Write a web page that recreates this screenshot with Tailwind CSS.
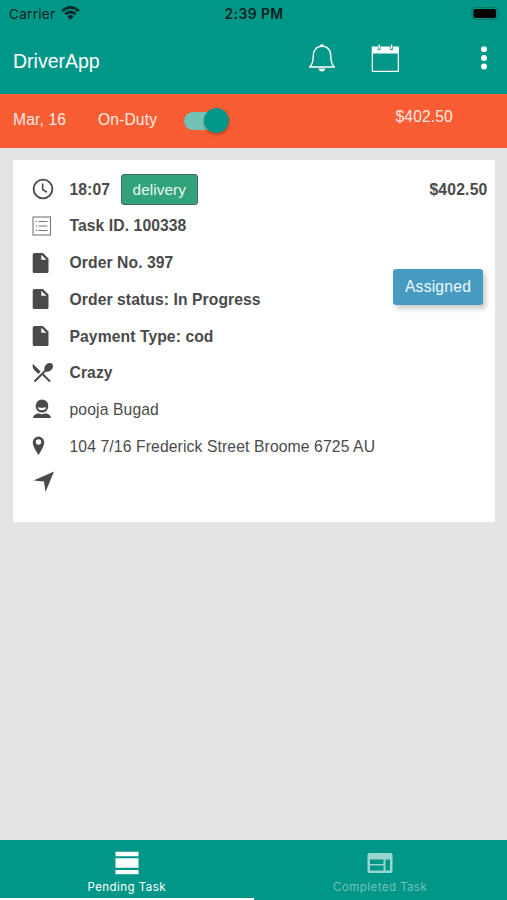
<!DOCTYPE html>
<html lang="en">
<head>
<meta charset="utf-8">
<title>DriverApp</title>
<script src="https://cdn.jsdelivr.net/npm/@tailwindcss/browser@4"></script>
</head>
<body class="w-[507px] h-[900px] overflow-hidden bg-[#e2e4e6] flex flex-col font-['Liberation_Sans',Arial,sans-serif] text-[#4a4a4a]">
<header class="h-[94px] shrink-0 bg-[#009688]">
  <div class="h-[28px] grid grid-cols-3 items-center pl-[9px] pr-[6px] text-black/80 font-['Inter',sans-serif] text-[13.5px]">
    <div class="flex items-center gap-[6px]"><span id="carrier" class="tracking-[0.3px]">Carrier</span>
      <svg class="w-[19px] h-[14px] -mt-[2px]" viewBox="0 0 19 14"><g fill="none" stroke="#062a27" stroke-width="2.8"><path d="M1.2 5Q9.500-2.200 17.800 5"/><path d="M4.200 8.300Q9.500 3.600 14.800 8.300"/></g><path d="M6.300 10.300Q9.500 7.700 12.700 10.300L9.500 13.700Z" fill="#062a27"/></svg>
    </div>
    <span id="time" class="text-center font-semibold text-[13.800px] tracking-[0.500px] -ml-[2px] pt-[1px]">2:39 PM</span>
    <svg class="justify-self-end w-[30px] h-[15px] -mt-[2px]" viewBox="0 0 30 15"><rect x="1" y="1.500" width="25.500" height="12" rx="3.500" fill="none" stroke="#047469" stroke-width="1.200"/><rect x="2.500" y="3" width="22.500" height="9" rx="2" fill="#000"/><path d="M28 5.500q2 2 0 4z" fill="#047469"/></svg>
  </div>
  <div class="h-[66px] flex items-start pl-[13px] text-white">
    <h1 class="w-[295px] pt-[21px] text-[19.500px] leading-[24px]"><span id="title">DriverApp</span></h1>
    <svg class="mt-[15px] w-[28px] h-[30px]" viewBox="0 0 28 30" fill="none" stroke="white" stroke-width="1.400"><path d="M1.500 24C4.500 21.500 5.200 19 5.200 13.500C5.200 7 8.500 3.300 14 3.300S22.800 7 22.800 13.500C22.800 19 23.500 21.500 26.500 24Z" stroke-linejoin="round"/><path d="M12 3.300a2 2 0 0 1 4 0z M10.500 25.500h7q-.8 3-3.500 3t-3.500-3z" fill="white" stroke="none"/></svg>
    <svg class="mt-[15px] ml-[35px] w-[29px] h-[30px]" viewBox="0 0 29 30"><path d="M.7 3.500H28V29H.7z M2 10.500V27.700H26.700V10.500z" fill="white" fill-rule="evenodd"/><g stroke="#009688" stroke-width="2.600"><path d="M8.200 3.400v3.600M20.600 3.400v3.600"/></g><g stroke="white" stroke-width="1.300"><path d="M8.200 1.500v4.500M20.600 1.500v4.500"/></g></svg>
    <svg class="mt-[16px] ml-[80px] w-[8px] h-[28px]" viewBox="0 0 8 28" fill="white"><circle cx="4" cy="5.300" r="3"/><circle cx="4" cy="14" r="3"/><circle cx="4" cy="22.500" r="3"/></svg>
  </div>
</header>
<section class="h-[53.500px] shrink-0 bg-[#f95d33] flex items-start text-[15.600px] leading-[20px] tracking-[0.150px] text-[#ffe9e2]">
  <span class="w-[98px] pl-[13px] pt-[16px]"><span id="date">Mar, 16</span></span>
  <span class="w-[86px] pt-[16px]"><span id="duty">On-Duty</span></span>
  <div class="relative mt-[18px] w-[46px] h-[18px]"><div class="absolute left-0 top-0 w-[40px] h-[18px] rounded-full bg-[#72c2b6]"></div><div class="absolute left-[20px] -top-[4px] w-[25px] h-[25px] rounded-full bg-[#009688] shadow-[0_2px_3px_rgba(0,0,0,0.25)]"></div></div>
  <span class="ml-[165.500px] pt-[13px]"><span id="amt">$402.50</span></span>
</section>
<main class="flex-1 pt-[12px] pl-[13px] pr-[12.500px]">
  <article class="relative h-[362.500px] bg-white pt-[12px] pl-[18px] pr-[7px] text-[15.700px] leading-[20px] tracking-[0.080px] font-bold">
    <div class="h-[36.650px] flex items-center -mt-[0.500px]">
      <svg class="w-[24px] h-[24px]" viewBox="0 0 24 24" fill="none" stroke="#4a4a4a" stroke-width="1.900"><circle cx="12" cy="12" r="9.400"/><path d="M11.700 6.500V12.500L16 15.200" stroke-width="1.600"/></svg>
      <span class="ml-[14.500px] w-[51px] pt-[1.500px]"><span id="r1">18:07</span></span>
      <span class="w-[77.500px] h-[31px] pt-[1.500px] flex items-center justify-center rounded-[3px] border border-[#4b6358] bg-[#32a27b] text-[#e8f8f2] text-[15.300px] font-normal"><span id="del">delivery</span></span>
      <span id="total" class="ml-auto pt-[1.500px] tracking-[0.200px]">$402.50</span>
    </div>
    <div class="h-[36.650px] flex items-center">
      <svg class="w-[24px] h-[24px] mr-[14.500px]" viewBox="0 0 24 24" fill="none" stroke="#777"><rect x="2" y="3" width="17.500" height="18" stroke-width="1.100"/><path d="M7.500 7.500h9M7.500 12h9M7.500 16.500h9M4.500 7.500h1.500M4.500 12h1.500M4.500 16.500h1.500"/></svg>
      <span id="r2" class="pt-[1px]">Task ID. 100338</span>
    </div>
    <div class="h-[36.650px] flex items-center">
      <svg class="w-[24px] h-[24px] mr-[14.500px]" viewBox="0 0 24 24" fill="#4a4a4a"><path fill-rule="evenodd" d="M3.500 2H12L17.500 7.500V20.500Q17.500 22 16 22H3.300Q1.700 22 1.700 20.500V3.700Q1.700 2 3.500 2zM10.300 3.700V8.800H15.500z"/></svg>
      <span id="r3" class="pt-[1px]">Order No. 397</span>
    </div>
    <div class="h-[36.650px] flex items-center">
      <svg class="w-[24px] h-[24px] mr-[14.500px]" viewBox="0 0 24 24" fill="#4a4a4a"><path fill-rule="evenodd" d="M3.500 2H12L17.500 7.500V20.500Q17.500 22 16 22H3.300Q1.700 22 1.700 20.500V3.700Q1.700 2 3.500 2zM10.300 3.700V8.800H15.500z"/></svg>
      <span id="r4" class="pt-[1.500px]">Order status: In Progress</span>
    </div>
    <div class="h-[36.650px] flex items-center">
      <svg class="w-[24px] h-[24px] mr-[14.500px]" viewBox="0 0 24 24" fill="#4a4a4a"><path fill-rule="evenodd" d="M3.500 2H12L17.500 7.500V20.500Q17.500 22 16 22H3.300Q1.700 22 1.700 20.500V3.700Q1.700 2 3.500 2zM10.300 3.700V8.800H15.500z"/></svg>
      <span id="r5" class="pt-[1.500px]">Payment Type: cod</span>
    </div>
    <div class="h-[36.650px] flex items-center">
      <svg class="w-[24px] h-[24px] mr-[14.500px]" viewBox="0 0 24 24" fill="#4a4a4a"><path d="M2 3L9.600 10.600L7.400 13L3.500 9.200Q.7 6.100 2 3z"/><ellipse cx="17.600" cy="6.400" rx="5" ry="3.700" transform="rotate(-45 17.600 6.400)"/><path d="M3.500 20.500L15 9M11 12.500L19 20.500" fill="none" stroke="#4a4a4a" stroke-width="2"/></svg>
      <span id="r6" class="pt-[1px]">Crazy</span>
    </div>
    <div class="h-[36.650px] flex items-center font-normal tracking-[0.120px]">
      <svg class="w-[24px] h-[24px] mr-[14.500px]" viewBox="0 0 24 24" fill="#4a4a4a"><path fill-rule="evenodd" d="M11 2.500a6.300 6.300 0 0 1 6.300 6.300c0 4-2.800 6.800-6.300 6.800s-6.300-2.800-6.300-6.800A6.300 6.300 0 0 1 11 2.500zM6.800 10.300Q7.300 13.300 11 13.300T15.200 10.300Q13 10.900 11 10.700Q8.500 10.900 6.800 10.300z"/><path d="M2 21Q2.300 17.300 7.500 16.200Q11 18.300 14.500 16.200Q19.700 17.300 20 21z"/></svg>
      <span id="r7" class="pt-[1.500px]">pooja Bugad</span>
    </div>
    <div class="h-[36.650px] flex items-center font-normal tracking-[0.120px]">
      <svg class="w-[24px] h-[24px] mr-[14.500px]" viewBox="0 0 24 24" fill="#4a4a4a"><path fill-rule="evenodd" d="M7.500 2.500A5.700 5.700 0 0 1 13.200 8.200C13.200 12.500 9.500 17.500 7.500 21C5.500 17.500 1.800 12.500 1.800 8.200A5.700 5.700 0 0 1 7.500 2.500zM7.500 5.300a2.700 2.700 0 1 0 0 5.400a2.700 2.700 0 0 0 0-5.400z"/></svg>
      <span id="r8" class="pt-[1.500px]">104 7/16 Frederick Street Broome 6725 AU</span>
    </div>
    <div class="h-[36.650px] flex items-center">
      <svg class="w-[24px] h-[24px]" viewBox="0 0 24 24" fill="#4a4a4a"><path d="M2.500 10.500L23 1.500L14.500 22L13 11.500z"/></svg>
    </div>
    <button class="absolute left-[380px] top-[109px] w-[90px] h-[36px] rounded-[3px] bg-[#489bc0] text-[#eef9ff] font-normal tracking-[0.200px] shadow-[3px_4px_5px_rgba(0,0,0,0.2)]"><span id="asg">Assigned</span></button>
  </article>
</main>
<nav class="relative h-[60px] shrink-0 bg-[#009688] grid grid-cols-2 font-['Inter',sans-serif] text-[11.500px] leading-[14px] text-white">
  <div class="flex flex-col items-center pt-[11px]">
    <svg class="w-[24px] h-[24px]" viewBox="0 0 24 24" fill="white"><path d="M.5 .7h23v4.500H.5zM.5 7.200h23v9.600H.5zM.5 19h23v4.200H.5z"/></svg>
    <span id="pend" class="mt-[5px] tracking-[0.450px]">Pending Task</span>
  </div>
  <div class="flex flex-col items-center pt-[11px] text-[#73c2b8]">
    <svg class="w-[26px] h-[24px]" viewBox="0 0 26 24" fill="#99d5cf"><path fill-rule="evenodd" d="M2.500 2h21q2 0 2 2v16q0 2-2 2h-21q-2 0-2-2v-16q0-2 2-2zM3 8.500v4.500h13.500v-4.500zM3 14.500v5h13.500v-5zM18.500 8.500v11h4.500v-11z"/></svg>
    <span id="comp" class="mt-[5px] tracking-[0.450px]">Completed Task</span>
  </div>
  <div class="absolute left-0 bottom-0 w-[254px] h-[2.500px] bg-white"></div>
</nav>
</body>
</html>
